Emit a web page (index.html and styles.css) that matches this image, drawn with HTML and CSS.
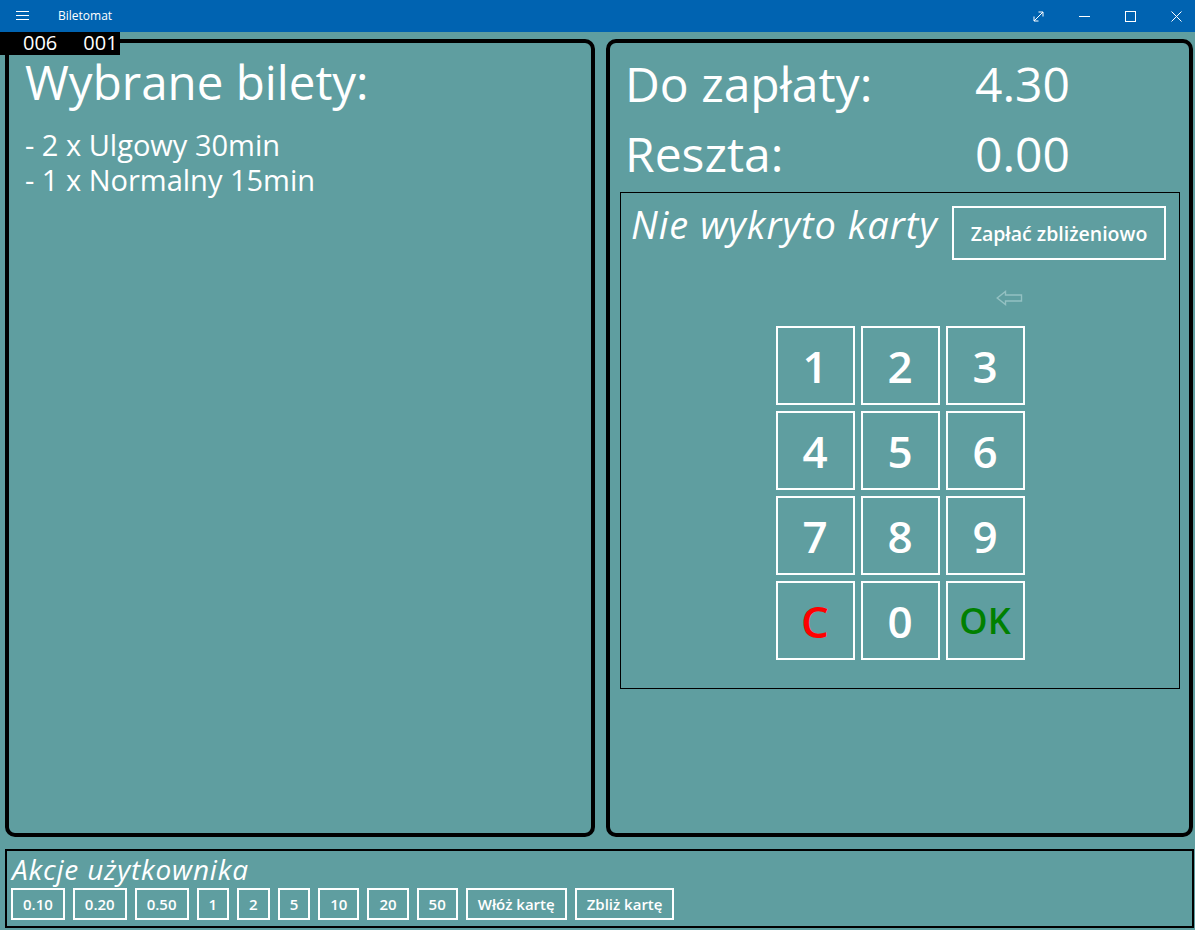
FILE: index.html
```html
<!DOCTYPE html>
<html lang="pl">
<head>
<meta charset="utf-8">
<title>Biletomat</title>
<link rel="stylesheet" href="styles.css">
</head>
<body>
<header class="titlebar">
  <span class="hamburger">
    <svg width="13" height="10" viewBox="0 0 13 10"><path d="M0 0.5H13M0 4.5H13M0 8.5H13" stroke="#fff" stroke-width="1" fill="none"/></svg>
  </span>
  <span class="app-title">Biletomat</span>
  <span class="controls">
    <svg width="11" height="11" viewBox="0 0 11 11"><path d="M1 10L10 1M5.5 1H10V5.5M1 5.5V10H5.5" stroke="#fff" stroke-width="1" fill="none"/></svg>
    <svg width="11" height="11" viewBox="0 0 11 11"><path d="M0 5.5H11" stroke="#fff" stroke-width="1" fill="none"/></svg>
    <svg width="11" height="11" viewBox="0 0 11 11"><rect x="0.5" y="0.5" width="10" height="10" stroke="#fff" stroke-width="1" fill="none"/></svg>
    <svg width="11" height="11" viewBox="0 0 11 11"><path d="M0.5 0.5L10.5 10.5M10.5 0.5L0.5 10.5" stroke="#fff" stroke-width="1" fill="none"/></svg>
  </span>
</header>
<div class="counter"><span>006</span><span>001</span></div>
<main class="main">
  <section class="panel panel-left">
    <h1 class="heading">Wybrane bilety:</h1>
    <ul class="tickets">
      <li>- 2 x Ulgowy 30min</li>
      <li>- 1 x Normalny 15min</li>
    </ul>
  </section>
  <section class="panel panel-right">
    <div class="sum-row"><span class="sum-label">Do zapłaty:</span><span class="sum-value">4.30</span></div>
    <div class="sum-row"><span class="sum-label">Reszta:</span><span class="sum-value">0.00</span></div>
    <div class="card-box">
      <div class="card-head">
        <span class="card-status">Nie wykryto karty</span>
        <button class="outline-btn pay-btn">Zapłać zbliżeniowo</button>
      </div>
      <div class="keypad-wrap">
        <div class="back-row">
          <svg width="27" height="16" viewBox="0 0 27 16"><path d="M1.2 8L9.5 1.5V5H25.5V11H9.5V14.5Z" stroke="#94c1c2" stroke-width="1.4" fill="none" stroke-linejoin="miter"/></svg>
        </div>
        <div class="keypad">
          <button class="key">1</button>
          <button class="key">2</button>
          <button class="key">3</button>
          <button class="key">4</button>
          <button class="key">5</button>
          <button class="key">6</button>
          <button class="key">7</button>
          <button class="key">8</button>
          <button class="key">9</button>
          <button class="key key-c">C</button>
          <button class="key">0</button>
          <button class="key key-ok">OK</button>
        </div>
      </div>
    </div>
  </section>
</main>
<section class="actions">
  <div class="actions-title">Akcje użytkownika</div>
  <div class="actions-row">
    <button class="outline-btn small-btn">0.10</button>
    <button class="outline-btn small-btn">0.20</button>
    <button class="outline-btn small-btn">0.50</button>
    <button class="outline-btn small-btn">1</button>
    <button class="outline-btn small-btn">2</button>
    <button class="outline-btn small-btn">5</button>
    <button class="outline-btn small-btn">10</button>
    <button class="outline-btn small-btn">20</button>
    <button class="outline-btn small-btn">50</button>
    <button class="outline-btn small-btn">Włóż kartę</button>
    <button class="outline-btn small-btn">Zbliż kartę</button>
  </div>
</section>
</body>
</html>
```

FILE: styles.css
```css
* {
  box-sizing: border-box;
}

html, body {
  margin: 0;
  padding: 0;
}

body {
  width: 1195px;
  height: 930px;
  overflow: hidden;
  position: relative;
  background: #5f9ea0;
  color: #fff;
  font-family: "Open Sans", "Noto Sans", sans-serif;
}

.titlebar {
  height: 32px;
  background: #0063b1;
  display: flex;
  align-items: center;
}

.hamburger {
  display: flex;
  padding-left: 16px;
  width: 58px;
}

.app-title {
  font-size: 12px;
  line-height: 32px;
}

.controls {
  margin-left: auto;
  padding-right: 13px;
  display: flex;
  align-items: center;
  gap: 35px;
}

.counter {
  position: absolute;
  left: 0;
  top: 32px;
  width: 120px;
  height: 23px;
  background: #000;
  display: flex;
  gap: 26px;
  padding-left: 23px;
  font-size: 20px;
  line-height: 22px;
}

.main {
  display: grid;
  grid-template-columns: 590px 587px;
  column-gap: 11px;
  padding: 7px 0 0 5px;
}

.panel {
  height: 798px;
  border: 4px solid #000;
  border-radius: 10px;
}

.panel-left {
  padding: 13px 16px 0 16px;
}

.heading {
  margin: 0;
  font-size: 47.5px;
  font-weight: 400;
  line-height: 52px;
}

.tickets {
  list-style: none;
  margin: 19px 0 0 0;
  padding: 0;
  font-size: 29px;
  line-height: 35px;
}

.panel-right {
  padding-top: 6px;
}

.sum-row {
  display: grid;
  grid-template-columns: 350px 1fr;
  padding-left: 15px;
  font-size: 48px;
  line-height: 70px;
}

.card-box {
  margin: 3px 9px 0 10px;
  height: 497px;
  border: 1px solid #000;
}

.card-head {
  display: flex;
  justify-content: space-between;
  align-items: flex-start;
  padding: 9px 13px 0 10px;
}

.card-status {
  font-size: 38px;
  font-style: italic;
  font-weight: 400;
  letter-spacing: 1px;
  line-height: 44px;
}

.outline-btn {
  background: transparent;
  border: 2px solid #fff;
  color: #fff;
  font-family: inherit;
  font-weight: 600;
  padding: 0;
}

.pay-btn {
  width: 214px;
  height: 54px;
  margin-top: 4px;
  font-size: 19.5px;
}

.keypad-wrap {
  width: 249px;
  margin: 0 auto;
}

.back-row {
  height: 66px;
  padding: 30px 2px 0 0;
  display: flex;
  justify-content: flex-end;
}

.keypad {
  display: grid;
  grid-template-columns: repeat(3, 79px);
  grid-auto-rows: 79px;
  gap: 6px;
}

.key {
  background: transparent;
  border: 2px solid #fff;
  color: #fff;
  font-family: inherit;
  font-size: 44px;
  font-weight: 600;
  padding: 0;
  display: flex;
  align-items: center;
  justify-content: center;
}

.key-c {
  color: #ff0000;
}

.key-ok {
  color: #008000;
  font-size: 36px;
}

.actions {
  margin: 12px 1px 0 5px;
  height: 79px;
  border: 2px solid #000;
  padding: 0 4px;
}

.actions-title {
  font-size: 28px;
  font-style: italic;
  font-weight: 400;
  letter-spacing: 0.8px;
  line-height: 37px;
  padding-left: 1px;
}

.actions-row {
  display: flex;
  gap: 8px;
}

.small-btn {
  height: 32px;
  padding: 0 10px;
  font-size: 15px;
}
```
